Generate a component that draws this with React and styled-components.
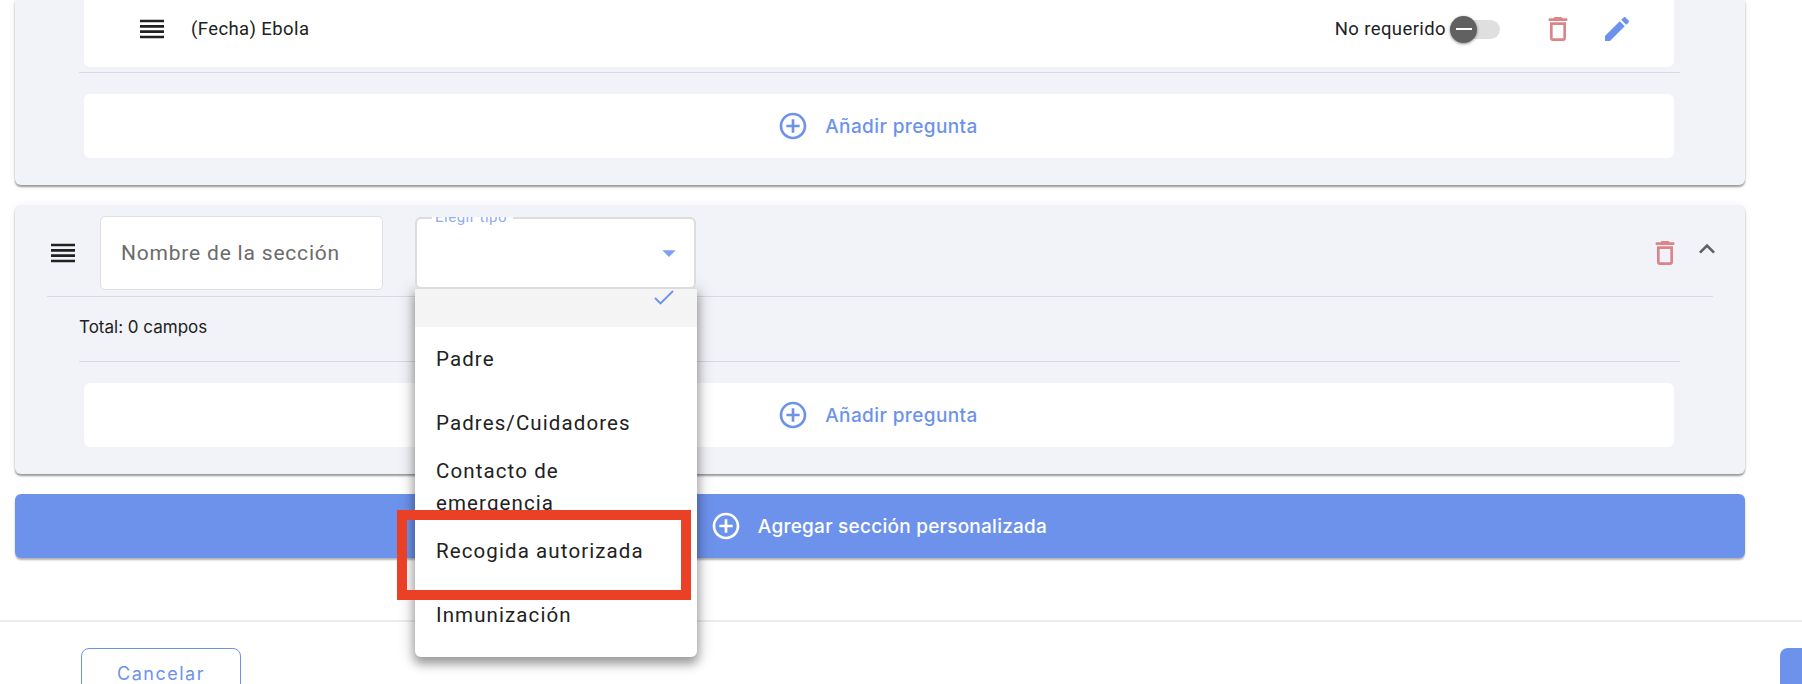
import React from 'react';
import styled, { createGlobalStyle } from 'styled-components';

const Global = createGlobalStyle`
  html, body {
    margin: 0;
    height: 684px;
    overflow: hidden;
    background: #fff;
    font-family: Roboto, "Liberation Sans", sans-serif;
    color: #212121;
  }
`;

const Page = styled.div`
  width: 1802px;
  height: 684px;
  overflow: hidden;
`;

const Content = styled.div`
  height: 620px;
  padding: 0 57px 0 15px;
  box-sizing: border-box;
  display: flex;
  flex-direction: column;
  gap: 20px;
`;

const Card = styled.section`
  flex: none;
  background: #f2f3f8;
  border-radius: ${p => (p.$cut ? '0 0 6px 6px' : '6px')};
  box-shadow: 0 2px 2px rgba(0, 0, 0, 0.38), 0 0 8px rgba(0, 0, 0, 0.06);
  padding-bottom: 27px;
`;

const WhiteRow = styled.div`
  margin: 0 71px 0 69px;
  background: #fff;
  border-radius: 0 0 6px 6px;
  height: 67px;
  padding: 0 41px 9px 52px;
  box-sizing: border-box;
  display: flex;
  align-items: center;
`;

const Icon = styled.svg`
  width: 32px;
  height: 32px;
  flex: none;
  display: block;
  fill: ${p => p.$color || '#212121'};
`;

const RowText = styled.span`
  font-size: 18.5px;
  letter-spacing: 0.4px;
  margin-left: 23px;
`;

const Spacer = styled.div`
  flex: 1;
`;

const RequiredLabel = styled.span`
  font-size: 18.5px;
  letter-spacing: 0.4px;
  margin-right: 4px;
`;

const Toggle = styled.div`
  position: relative;
  width: 50px;
  height: 19px;
  background: #dfdfdf;
  border-radius: 10px;
  margin-right: 42px;
`;

const Knob = styled.div`
  position: absolute;
  left: 0;
  top: -4px;
  width: 27px;
  height: 27px;
  border-radius: 50%;
  background: #616161;
  box-shadow: 0 1px 3px rgba(0, 0, 0, 0.45);
  display: flex;
  align-items: center;
  justify-content: center;
  &::after {
    content: '';
    width: 16px;
    height: 2px;
    background: #fff;
  }
`;

const IconGroup = styled.div`
  display: flex;
  gap: ${p => p.$gap}px;
  align-items: center;
`;

const Divider = styled.div`
  height: 1px;
  background: #d8d9e1;
  margin: ${p => p.$margin};
`;

const AddRow = styled.div`
  margin: 0 71px 0 69px;
  height: 64px;
  padding-right: 3px;
  background: #fff;
  border-radius: 6px;
  display: flex;
  align-items: center;
  justify-content: center;
  gap: 16px;
  color: #6d92ec;
  font-family: Inter, Roboto, sans-serif;
  font-size: 19px;
  font-weight: 500;
  letter-spacing: 0.4px;
`;

const SectionHeader = styled.div`
  margin: 0 22px 0 32px;
  padding: 11px 0 6px;
  display: flex;
  align-items: center;
`;

const NameInput = styled.div`
  margin-left: 21px;
  width: 283px;
  height: 74px;
  box-sizing: border-box;
  background: #fff;
  border: 1px solid #e0e0e4;
  border-radius: 5px;
  padding-left: 20px;
  display: flex;
  align-items: center;
  font-size: 21px;
  letter-spacing: 0.8px;
  color: #6b6b6b;
`;

const SelectWrap = styled.div`
  position: relative;
  z-index: 5;
  margin-left: 32px;
  width: 281px;
  height: 72px;
`;

const SelectField = styled.div`
  position: relative;
  z-index: 2;
  height: 72px;
  box-sizing: border-box;
  background: #fff;
  border: 2px solid #dcdcdc;
  border-radius: 6px;
  display: flex;
  justify-content: flex-end;
  align-items: center;
  padding: 0 9px 0 0;
`;

const Notch = styled.div`
  position: absolute;
  z-index: 3;
  left: 17px;
  top: 0;
  height: 9px;
  padding: 0 6px 0 3px;
  overflow: hidden;
  background: #fff;
`;

const NotchText = styled.span`
  display: block;
  margin-top: -8px;
  font-size: 15px;
  line-height: 17px;
  letter-spacing: 0.5px;
  color: #8fabf3;
`;

const Menu = styled.div`
  position: absolute;
  z-index: 1;
  left: 0;
  top: 72px;
  width: 282px;
  padding-bottom: 10px;
  background: #fff;
  border-radius: 0 0 6px 6px;
  box-shadow: 0 6px 10px 1px rgba(0, 0, 0, 0.3), 0 2px 16px 3px rgba(0, 0, 0, 0.16);
`;

const MenuItem = styled.div`
  position: relative;
  min-height: 64px;
  padding: 0 21px;
  box-sizing: border-box;
  display: flex;
  align-items: center;
  font-size: 20.5px;
  line-height: 32px;
  letter-spacing: 1.1px;
  color: #212121;
  background: #fff;
`;

const EmptyItem = styled.div`
  position: relative;
  height: 38px;
  background: #f4f4f4;
`;

const Check = styled.svg`
  position: absolute;
  right: 22px;
  top: -4px;
  width: 24px;
  height: 24px;
  fill: none;
  stroke: #6d92ec;
  stroke-width: 1.8;
`;

const Highlight = styled.div`
  position: absolute;
  left: -18px;
  top: 221px;
  width: 294px;
  height: 90px;
  box-sizing: border-box;
  border: 10px solid #ea4025;
`;

const TotalRow = styled.div`
  height: 64px;
  box-sizing: border-box;
  padding: 0 64px 4px;
  display: flex;
  align-items: center;
  font-family: Inter, Roboto, sans-serif;
  font-size: 17px;
`;

const AddSection = styled.div`
  height: 64px;
  flex: none;
  padding-right: 3px;
  border-radius: 6px;
  background: #6d92ec;
  box-shadow: 0 2px 2px rgba(0, 0, 0, 0.3);
  color: #fff;
  display: flex;
  align-items: center;
  justify-content: center;
  gap: 16px;
  font-family: Inter, Roboto, sans-serif;
  font-size: 19px;
  font-weight: 500;
  letter-spacing: 0.25px;
`;

const Footer = styled.footer`
  height: 64px;
  overflow: hidden;
  box-sizing: border-box;
  border-top: 2px solid #ececec;
  padding: 26px 0 0 81px;
  display: flex;
  justify-content: space-between;
  align-items: flex-start;
`;

const CancelButton = styled.div`
  width: 160px;
  height: 50px;
  box-sizing: border-box;
  border: 1px solid #6d92ec;
  border-radius: 8px;
  color: #6d92ec;
  font-family: Inter, Roboto, sans-serif;
  font-size: 18px;
  font-weight: 400;
  letter-spacing: 1.5px;
  display: flex;
  align-items: center;
  justify-content: center;
`;

const SaveButton = styled.div`
  width: 22px;
  height: 50px;
  background: #6d92ec;
  border-radius: 8px 0 0 8px;
`;

const ChevronUp = styled(Icon)`
  margin-bottom: 8px;
`;

const Reorder = () => (
  <Icon viewBox="0 0 24 24"><path d="M3 15h18v-2H3v2zm0 4h18v-2H3v2zm0-8h18V9H3v2zm0-6v2h18V5H3z" /></Icon>
);
const Trash = () => (
  <Icon viewBox="0 0 24 24" $color="#dc8487"><path d="M6 19c0 1.1.9 2 2 2h8c1.1 0 2-.9 2-2V7H6v12zM8 9h8v10H8V9zm7.5-5l-1-1h-5l-1 1H5v2h14V4z" /></Icon>
);
const Pencil = () => (
  <Icon viewBox="0 0 24 24" $color="#6d92ec"><path d="M3 17.25V21h3.75L17.81 9.94l-3.75-3.75L3 17.25zM20.71 7.04c.39-.39.39-1.02 0-1.41l-2.34-2.34c-.39-.39-1.02-.39-1.41 0l-1.83 1.83 3.75 3.75 1.83-1.83z" /></Icon>
);
const PlusCircle = ({ color }) => (
  <Icon viewBox="0 0 24 24" $color={color}><path d="M13 7h-2v4H7v2h4v4h2v-4h4v-2h-4V7zm-1-5C6.48 2 2 6.48 2 12s4.48 10 10 10 10-4.48 10-10S17.52 2 12 2zm0 18c-4.41 0-8-3.59-8-8s3.59-8 8-8 8 3.59 8 8-3.59 8-8 8z" /></Icon>
);

const AddQuestion = () => (
  <AddRow>
    <PlusCircle color="#6d92ec" />
    Añadir pregunta
  </AddRow>
);

const App = () => {
  return (
    <Page>
      <Global />
      <Content>
        <Card $cut>
          <WhiteRow>
            <Reorder />
            <RowText>(Fecha) Ebola</RowText>
            <Spacer />
            <RequiredLabel>No requerido</RequiredLabel>
            <Toggle><Knob /></Toggle>
            <IconGroup $gap={27}>
              <Trash />
              <Pencil />
            </IconGroup>
          </WhiteRow>
          <Divider $margin="5px 65px 21px 64px" />
          <AddQuestion />
        </Card>

        <Card>
          <SectionHeader>
            <Reorder />
            <NameInput>Nombre de la sección</NameInput>
            <SelectWrap>
              <SelectField>
                <Icon viewBox="0 0 24 24" $color="#7f9ff0"><path d="M7 10l5 5 5-5z" /></Icon>
              </SelectField>
              <Notch><NotchText>Elegir tipo</NotchText></Notch>
              <Menu>
                <EmptyItem>
                  <Check viewBox="0 0 24 24"><path d="M4 13l5.5 5.5L22 6" /></Check>
                </EmptyItem>
                <MenuItem>Padre</MenuItem>
                <MenuItem>Padres/Cuidadores</MenuItem>
                <MenuItem>Contacto de emergencia</MenuItem>
                <MenuItem>Recogida autorizada</MenuItem>
                <MenuItem>Inmunización</MenuItem>
                <Highlight />
              </Menu>
            </SelectWrap>
            <Spacer />
            <IconGroup $gap={10}>
              <Trash />
              <ChevronUp viewBox="0 0 24 24" $color="#616161">
                <path d="M12 8l-6 6 1.41 1.41L12 10.83l4.59 4.58L18 14z" />
              </ChevronUp>
            </IconGroup>
          </SectionHeader>
          <Divider $margin="0 32px" />
          <TotalRow>Total: 0 campos</TotalRow>
          <Divider $margin="0 65px 21px 64px" />
          <AddQuestion />
        </Card>

        <AddSection>
          <PlusCircle color="#fff" />
          Agregar sección personalizada
        </AddSection>
      </Content>
      <Footer>
        <CancelButton>Cancelar</CancelButton>
        <SaveButton />
      </Footer>
    </Page>
  );
};

export default App;
